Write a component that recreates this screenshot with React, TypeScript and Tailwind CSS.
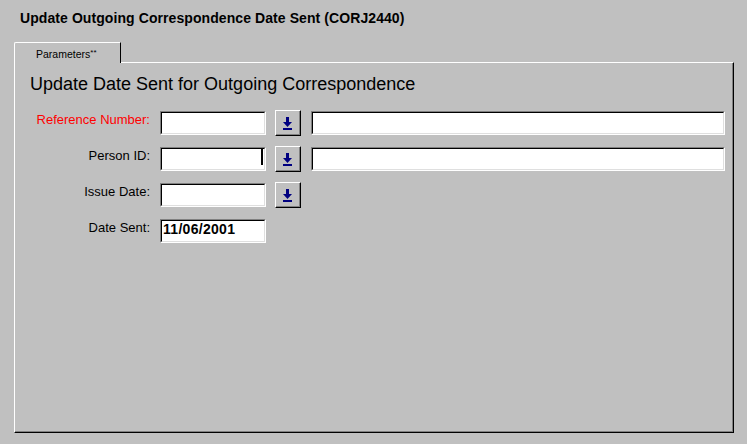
const Field = ({ width, children }: { width: string; children?: React.ReactNode }) => (
  <div className={`h-[24px] border border-t-[#808080] border-l-[#808080] border-r-white border-b-white ${width}`}>
    <div className="h-full border border-t-black border-l-black border-r-[#dfdfdf] border-b-[#dfdfdf] bg-white">
      {children}
    </div>
  </div>
);

const LookupButton = () => (
  <div className="ml-[9px] h-[26px] w-[26px] border border-t-white border-l-white border-r-black border-b-black">
    <div className="flex h-full justify-center border-r border-b border-[#808080] pt-[6px]">
      <svg width="9" height="13" viewBox="0 0 9 13">
        <rect x="3" y="0" width="3" height="6" fill="#000080" />
        <polygon points="0,5 9,5 4.5,10" fill="#000080" />
        <rect x="0" y="11" width="9" height="2" fill="#000080" />
      </svg>
    </div>
  </div>
);

export default function App() {
  const rows = [
    { label: 'Reference Number:', red: true, lookup: true, wide: true },
    { label: 'Person ID:', red: false, lookup: true, wide: true, caret: true },
    { label: 'Issue Date:', red: false, lookup: true, wide: false },
    { label: 'Date Sent:', red: false, lookup: false, wide: false, value: '11/06/2001' },
  ];

  return (
    <div className="h-[444px] w-[747px] overflow-hidden bg-[#c0c0c0] font-['Liberation_Sans',Arial,sans-serif] text-black">
      {/* Window title */}
      <div className="h-[42px] pl-[20px] pt-[10px] text-[14px] font-bold leading-[16px] tracking-[0.08px]">
        Update Outgoing Correspondence Date Sent (CORJ2440)
      </div>

      <div className="ml-[14px] w-[720px]">
        {/* Tab */}
        <div className="relative z-10 -mb-px h-[21px] w-[107px] rounded-tl-[2px] border-t border-l border-r border-t-white border-l-white border-r-black bg-[#c0c0c0] pl-[21px] pt-[5px] text-[10.5px] leading-[12px]">
          Parameters<span className="relative -top-[3px] text-[8px]">**</span>
        </div>

        {/* Panel */}
        <div className="h-[371px] border border-t-white border-l-white border-r-black border-b-black">
          <div className="h-full border-r border-b border-[#808080]">
            <div className="ml-[15px] pt-[11px] text-[18px] leading-[21px]">
              Update Date Sent for Outgoing Correspondence
            </div>

            <div className="mt-[15px] flex flex-col gap-[10px]">
              {rows.map((row) => (
                <div key={row.label} className="flex h-[26px] items-center">
                  <div
                    className={`w-[135px] self-start pt-[2px] text-right text-[13px] leading-[15px] ${
                      row.red ? 'text-[#ff0000]' : 'text-black'
                    }`}
                  >
                    {row.label}
                  </div>
                  <div className="ml-[10px]">
                    <Field width="w-[106px]">
                      {row.caret && (
                        <div className="flex h-full justify-end pr-[1px]">
                          <div className="h-[16px] w-[2px] bg-black" />
                        </div>
                      )}
                      {row.value && (
                        <div className="pl-[1px] text-[14px] font-bold leading-[16px] tracking-[0.3px]">
                          {row.value}
                        </div>
                      )}
                    </Field>
                  </div>
                  {row.lookup && <LookupButton />}
                  {row.wide && (
                    <div className="ml-[10px]">
                      <Field width="w-[414px]" />
                    </div>
                  )}
                </div>
              ))}
            </div>
          </div>
        </div>
      </div>
    </div>
  );
}
